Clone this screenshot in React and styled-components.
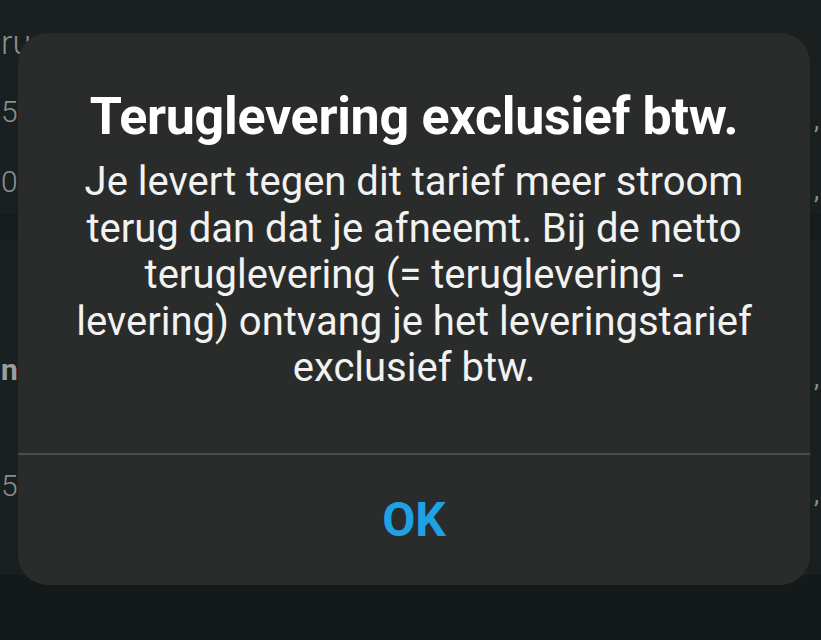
import React from 'react';
import styled, { createGlobalStyle } from 'styled-components';

const GlobalStyle = createGlobalStyle`
  html, body {
    margin: 0;
    padding: 0;
    background: #141a1a;
  }
  body {
    font-family: Roboto, "Noto Sans", "Liberation Sans", sans-serif;
  }
`;

const rows = [
  { label: 'ru', big: true, height: 72 },
  { label: '5(', comma: true, height: 70 },
  { label: '0(', comma: true, height: 50 },
  { label: '', band: true, height: 26 },
  { label: 'ns', bold: true, comma: true, height: 116, gap: 112 },
  { label: '5', comma: true, height: 100 },
];

const App = () => {
  return (
    <>
      <GlobalStyle />
      <Screen>
        <Backdrop>
          {rows.map((row, i) => (
            <Row key={i} $height={row.height} $band={row.band} $gap={row.gap}>
              <Label $big={row.big} $bold={row.bold}>{row.label}</Label>
              {row.comma && <Comma>,</Comma>}
            </Row>
          ))}
        </Backdrop>
        <Dialog>
          <Content>
            <Title>Teruglevering exclusief btw.</Title>
            <Message>
              Je levert tegen dit tarief meer stroom
              <br />
              terug dan dat je afneemt. Bij de netto
              <br />
              teruglevering (= teruglevering -
              <br />
              levering) ontvang je het leveringstarief
              <br />
              exclusief btw.
            </Message>
          </Content>
          <Actions>
            <OkButton>OK</OkButton>
          </Actions>
        </Dialog>
      </Screen>
    </>
  );
};

const Screen = styled.div`
  position: relative;
  width: 821px;
  height: 640px;
  overflow: hidden;
  background: #141a1a;
`;

const Backdrop = styled.div`
  display: flex;
  flex-direction: column;
  padding-top: 22px;
  height: 553px;
  background: #1a1f1f;
`;

const Row = styled.div`
  display: flex;
  justify-content: space-between;
  align-items: flex-start;
  height: ${p => p.$height}px;
  margin-top: ${p => p.$gap || 0}px;
  background: ${p => (p.$band ? '#161b1b' : 'transparent')};
  padding: 0 2px 0 1px;
  box-sizing: border-box;
`;

const Label = styled.span`
  font-size: ${p => (p.$big ? 34 : 30)}px;
  font-weight: ${p => (p.$bold ? 700 : 300)};
  color: ${p => (p.$bold ? '#9a9e9d' : '#8a8f8e')};
  line-height: 1.2;
`;

const Comma = styled.span`
  font-size: 26px;
  color: #8a8f8e;
  line-height: 2;
`;

const Dialog = styled.div`
  position: absolute;
  left: 18px;
  top: 33px;
  width: 792px;
  height: 552px;
  border-radius: 30px;
  background: #2a2c2b;
  display: flex;
  flex-direction: column;
  overflow: hidden;
`;

const Content = styled.div`
  padding: 53px 20px 0;
  height: 422px;
  box-sizing: border-box;
  text-align: center;
  border-bottom: 2px solid #4c4e4d;
`;

const Title = styled.h1`
  margin: 0 0 11px;
  font-size: 52px;
  line-height: 62px;
  font-weight: 700;
  color: #ffffff;
  letter-spacing: -0.3px;
`;

const Message = styled.p`
  margin: 0;
  font-size: 40px;
  line-height: 46.5px;
  font-weight: 400;
  color: #f2f2f2;
`;

const Actions = styled.div`
  flex: 1;
  display: flex;
  align-items: center;
  justify-content: center;
`;

const OkButton = styled.button`
  border: none;
  background: none;
  padding: 0;
  margin-top: -2px;
  font-family: inherit;
  font-size: 48px;
  font-weight: 700;
  color: #1fa2e4;
  cursor: pointer;
`;

export default App;
